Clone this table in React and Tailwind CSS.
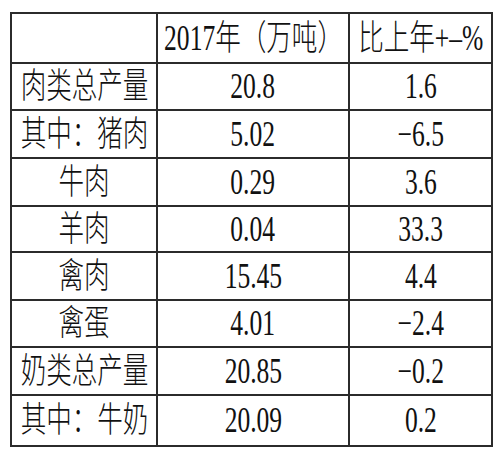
const rows = [
  { name: "肉类总产量", value: "20.8", change: "1.6", h: "h-[47px]" },
  { name: "其中：猪肉", value: "5.02", change: "−6.5", h: "h-[48px]" },
  { name: "牛肉", value: "0.29", change: "3.6", h: "h-[48px]" },
  { name: "羊肉", value: "0.04", change: "33.3", h: "h-[46px]" },
  { name: "禽肉", value: "15.45", change: "4.4", h: "h-[48px]" },
  { name: "禽蛋", value: "4.01", change: "−2.4", h: "h-[47px]" },
  { name: "奶类总产量", value: "20.85", change: "−0.2", h: "h-[48px]" },
  { name: "其中：牛奶", value: "20.09", change: "0.2", h: "h-[51px]" },
];

function Cell({ children }) {
  return (
    <td className="border-2 border-[#2b2b2b] p-0">
      <div className="flex justify-center">
        <span className="inline-block whitespace-nowrap scale-x-[0.73] leading-none">{children}</span>
      </div>
    </td>
  );
}

export default function App() {
  return (
    <div
      className="w-[500px] h-[457px] bg-white pl-[10px] pt-[12px] text-[#111] text-[35px] font-light"
      style={{ fontFamily: '"Liberation Serif", "Noto Sans CJK SC", serif' }}
    >
      <table className="table-fixed border-collapse w-[481px]">
        <colgroup>
          <col className="w-[146px]" />
          <col className="w-[192px]" />
          <col className="w-[143px]" />
        </colgroup>
        <tbody>
          <tr className="h-[50px]">
            <Cell></Cell>
            <Cell>2017年（万吨）</Cell>
            <Cell>比上年+–%</Cell>
          </tr>
          {rows.map((r) => (
            <tr key={r.name} className={r.h}>
              <Cell>{r.name}</Cell>
              <Cell>{r.value}</Cell>
              <Cell>{r.change}</Cell>
            </tr>
          ))}
        </tbody>
      </table>
    </div>
  );
}
